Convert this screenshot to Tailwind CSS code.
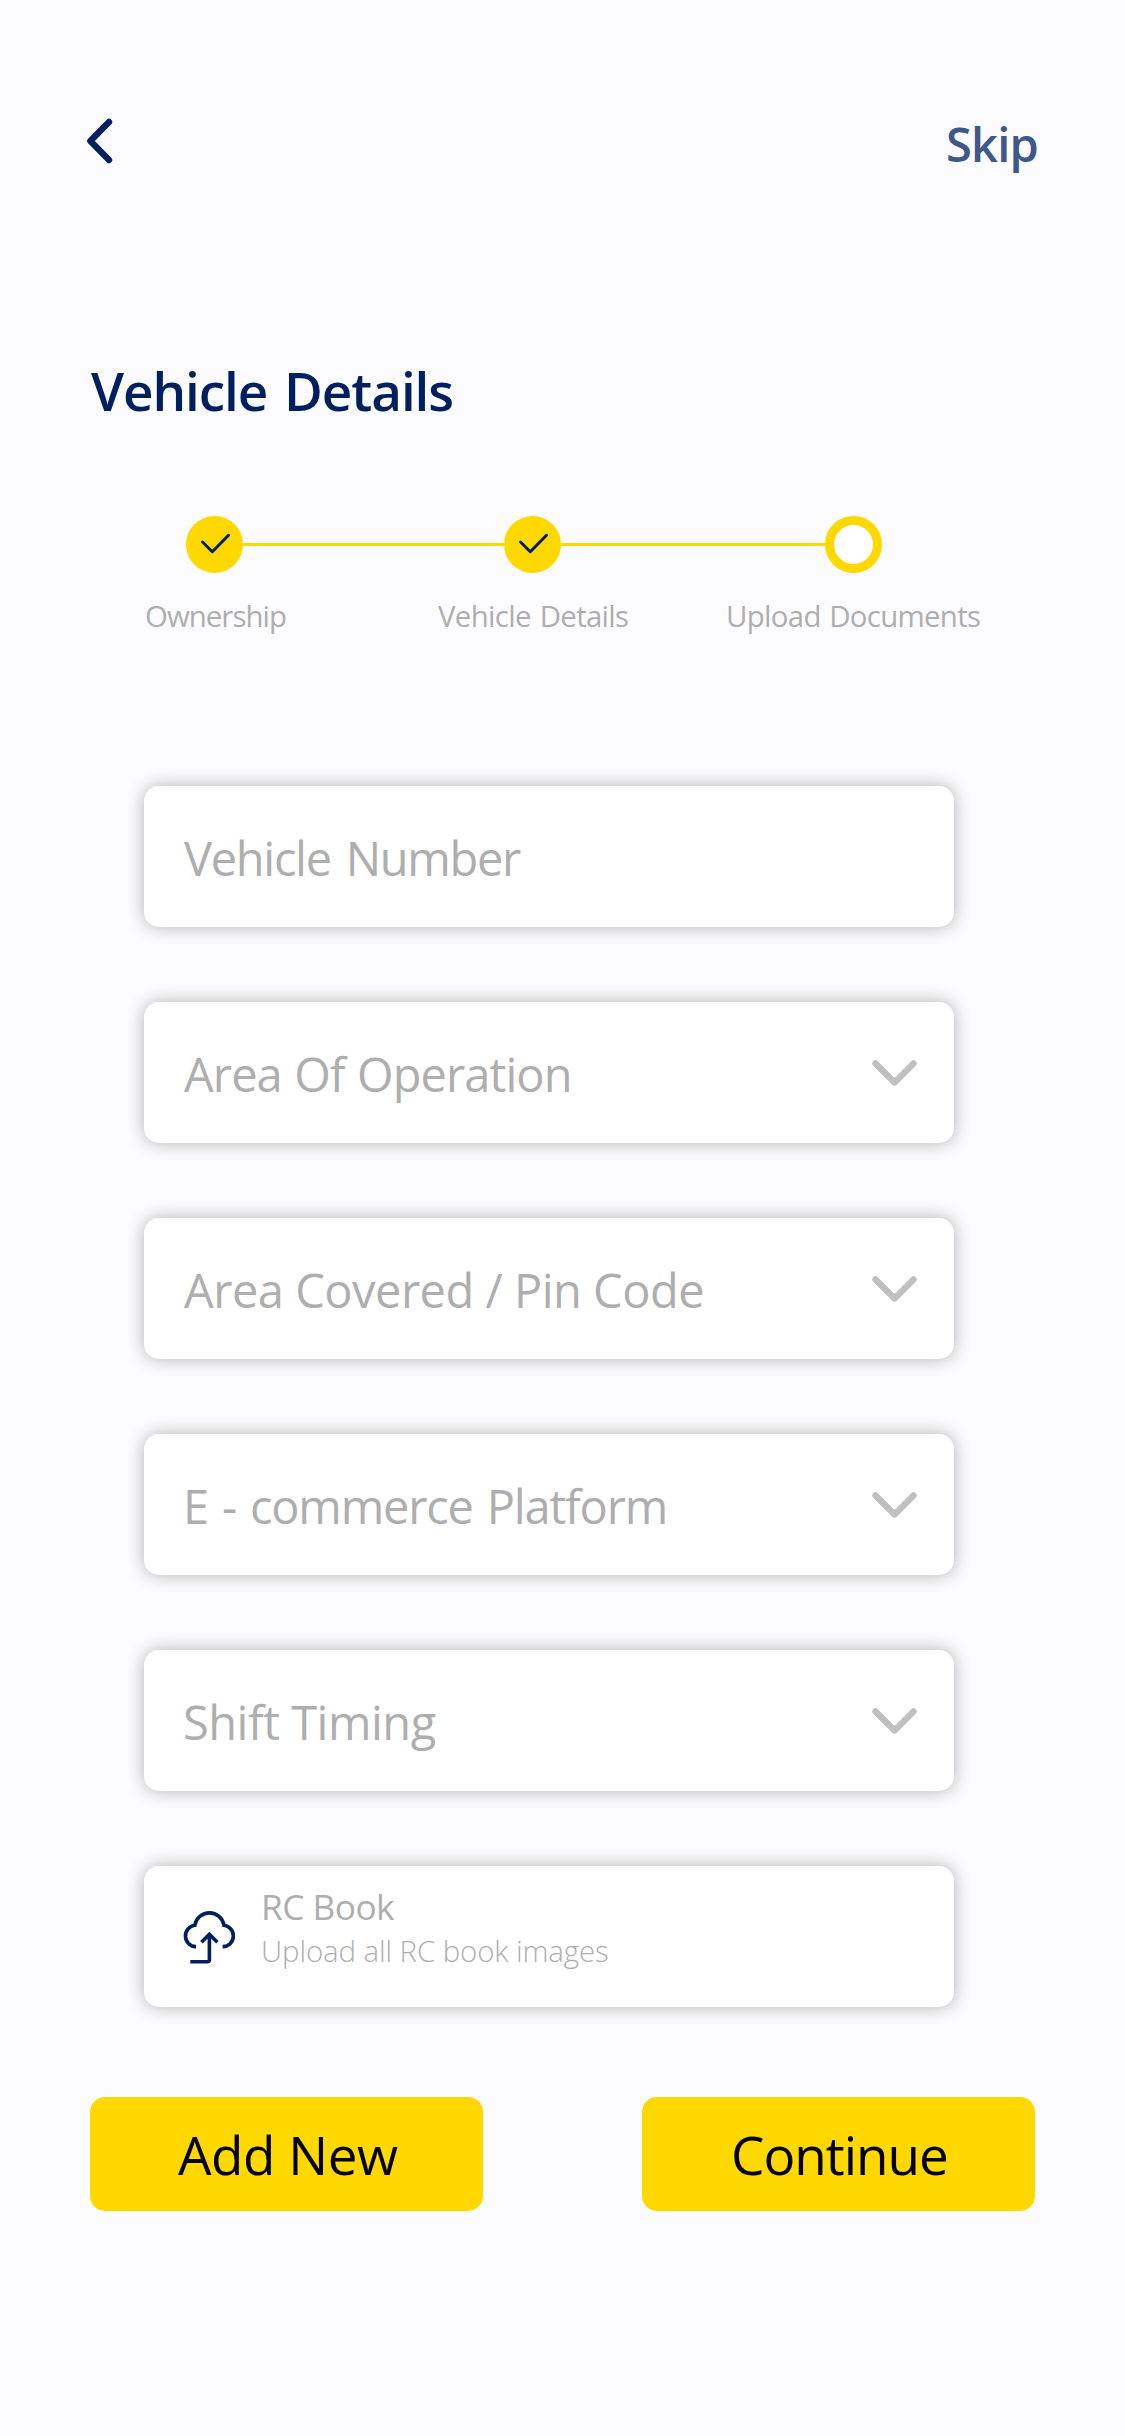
<!DOCTYPE html>
<html lang="en">
<head>
<meta charset="utf-8">
<title>Vehicle Details</title>
<script src="https://cdn.jsdelivr.net/npm/@tailwindcss/browser@4"></script>
</head>
<body class="bg-[#fcfcff]">
<main class="flex h-[2436px] w-[1125px] flex-col overflow-hidden bg-[#fcfcff] pt-[94px] font-['Open_Sans','Noto_Sans',sans-serif] whitespace-nowrap">
  <header class="flex h-[100px] items-center justify-between pr-[87px] pl-[84px]">
    <button aria-label="Back" class="-mt-1.5">
      <svg class="h-[48px] w-[32px]" viewBox="0 0 32 48" fill="none" stroke="#001f5f" stroke-width="6.4" stroke-linecap="round" stroke-linejoin="round"><path d="M25 5 6.4 24 25 43"/></svg>
    </button>
    <a class="text-[47px] leading-[100px] font-semibold tracking-[-0.8px] text-[#40578a]">Skip</a>
  </header>

  <h1 class="mt-[157px] ml-[91px] text-[53px] leading-[80px] font-semibold tracking-[-1.05px] text-[#001f5f] [word-spacing:4px]">Vehicle Details</h1>

  <!-- Progress steps -->
  <div class="mt-[85px] flex items-center pl-[186px]">
    <div class="size-[57px] rounded-full bg-[#ffd800]">
      <svg class="size-[57px]" viewBox="0 0 57 57" fill="none" stroke="#001f5f" stroke-width="3" stroke-linecap="round" stroke-linejoin="round"><path d="M16.5 26 26.3 35.7 42.5 19.3"/></svg>
    </div>
    <div class="h-[3px] w-[261px] bg-[#ffd800]"></div>
    <div class="size-[57px] rounded-full bg-[#ffd800]">
      <svg class="size-[57px]" viewBox="0 0 57 57" fill="none" stroke="#001f5f" stroke-width="3" stroke-linecap="round" stroke-linejoin="round"><path d="M16.5 26 26.3 35.7 42.5 19.3"/></svg>
    </div>
    <div class="h-[3px] w-[264px] bg-[#ffd800]"></div>
    <div class="size-[57px] rounded-full border-[9px] border-[#ffd800] bg-white"></div>
  </div>
  <div class="mt-[23px] flex pl-[145px] text-[29.4px] leading-[40px] text-[#aeaeae]">
    <span class="w-[293px] tracking-[-0.95px]">Ownership</span>
    <span class="w-[288px] tracking-[-0.68px] [word-spacing:2px]">Vehicle Details</span>
    <span class="tracking-[-0.69px] [word-spacing:1.5px]">Upload Documents</span>
  </div>

  <!-- Form fields -->
  <form class="mt-[150px] ml-[144px] flex w-[810px] flex-col gap-[75px] text-[47px] text-[#aeaeae]">
    <div class="flex h-[141px] items-center rounded-[15px] bg-white pr-[37px] pl-[40px] shadow-[0_0_18px_rgba(0,0,0,0.3)]">
      <span class="pt-[4px] tracking-[-1.3px] [word-spacing:4px]">Vehicle Number</span>
    </div>
    <div class="flex h-[141px] items-center justify-between rounded-[15px] bg-white pr-[37px] pl-[40px] shadow-[0_0_18px_rgba(0,0,0,0.3)]">
      <span class="pt-[4px] tracking-[-0.9px] [word-spacing:1px]">Area Of Operation</span>
      <svg class="h-[26px] w-[45px]" viewBox="0 0 45 26" fill="none" stroke="#bfbfbf" stroke-width="6.4" stroke-linecap="round" stroke-linejoin="round"><path d="M3.5 3.5 22.5 22.5 41.5 3.5"/></svg>
    </div>
    <div class="flex h-[141px] items-center justify-between rounded-[15px] bg-white pr-[37px] pl-[40px] shadow-[0_0_18px_rgba(0,0,0,0.3)]">
      <span class="pt-[4px] tracking-[-0.5px]">Area Covered / Pin Code</span>
      <svg class="h-[26px] w-[45px]" viewBox="0 0 45 26" fill="none" stroke="#bfbfbf" stroke-width="6.4" stroke-linecap="round" stroke-linejoin="round"><path d="M3.5 3.5 22.5 22.5 41.5 3.5"/></svg>
    </div>
    <div class="flex h-[141px] items-center justify-between rounded-[15px] bg-white pr-[37px] pl-[39px] shadow-[0_0_18px_rgba(0,0,0,0.3)]">
      <span class="pt-[4px] tracking-[-1.19px] [word-spacing:3px]">E - commerce Platform</span>
      <svg class="h-[26px] w-[45px]" viewBox="0 0 45 26" fill="none" stroke="#bfbfbf" stroke-width="6.4" stroke-linecap="round" stroke-linejoin="round"><path d="M3.5 3.5 22.5 22.5 41.5 3.5"/></svg>
    </div>
    <div class="flex h-[141px] items-center justify-between rounded-[15px] bg-white pr-[37px] pl-[39px] shadow-[0_0_18px_rgba(0,0,0,0.3)]">
      <span class="pt-[4px] tracking-[-0.5px]">Shift Timing</span>
      <svg class="h-[26px] w-[45px]" viewBox="0 0 45 26" fill="none" stroke="#bfbfbf" stroke-width="6.4" stroke-linecap="round" stroke-linejoin="round"><path d="M3.5 3.5 22.5 22.5 41.5 3.5"/></svg>
    </div>
    <div class="flex h-[141px] items-start gap-[24px] rounded-[15px] bg-white pt-[16px] pl-[39px] shadow-[0_0_18px_rgba(0,0,0,0.3)]">
      <svg class="mt-[29px] size-[54px]" viewBox="0 0 54 54" fill="none" stroke="#001f5f" stroke-width="3.6"><path d="M13 35.6h-.4a10.7 10.7 0 0 1-.8-21.3 14.8 14.8 0 0 1 29.2 0 10.7 10.7 0 0 1-.8 21.3h-.6"/><path d="M18.4 31.2 26.4 23.2 34.4 31.2M26.4 23.5V48.8q0 2-2 2H7.3"/></svg>
      <div class="flex flex-col">
        <span class="text-[35.3px] leading-[48px] tracking-[-0.56px]">RC Book</span>
        <span class="text-[29.4px] leading-[43px] font-light tracking-[-0.1px]">Upload all RC book images</span>
      </div>
    </div>
  </form>

  <div class="mt-[90px] flex gap-[159px] pl-[90px] text-[53px] leading-[116px] text-black">
    <button class="h-[114px] w-[393px] rounded-[15px] bg-[#ffd800] pt-[2px] pl-[88px] text-left leading-[112px] tracking-[-0.45px]">Add New</button>
    <button class="h-[114px] w-[393px] rounded-[15px] bg-[#ffd800] pt-[2px] pl-[89px] text-left leading-[112px] tracking-[-1px]">Continue</button>
  </div>
</main>
</body>
</html>
